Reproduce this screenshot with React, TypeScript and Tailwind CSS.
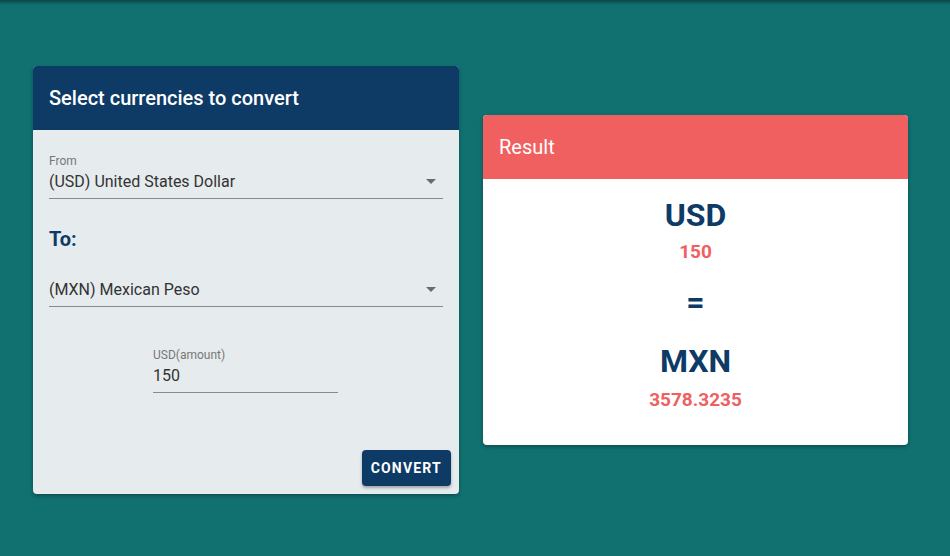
const Caret = () => (
  <svg width="10" height="5" viewBox="0 0 10 5" className="fill-[#6b6b6b]">
    <path d="M0 0 L10 0 L5 5 Z" />
  </svg>
);

const SelectField = ({ label, value }: { label?: string; value: string }) => (
  <div className="flex flex-col">
    {label && <span className="h-[16px] text-[12px] leading-[16px] text-[#777]">{label}</span>}
    <div className="flex items-center justify-between border-b border-[#8a8a8a] pt-[3px] pb-[7px]">
      <span className="text-[16px] leading-[19px] text-[#333]">{value}</span>
      <span className="mr-[7px]">
        <Caret />
      </span>
    </div>
  </div>
);

const App = () => {
  return (
    <div
      className="relative flex min-h-[556px] items-center gap-6 bg-[#117171] pl-[33px] pr-[42px] pt-1"
      style={{ fontFamily: 'Roboto, "Liberation Sans", sans-serif' }}
    >
      {/* app bar shadow */}
      <div className="absolute inset-x-0 top-0 h-[5px] bg-gradient-to-b from-[#0b4646] to-[#117171]" />

      {/* converter card */}
      <div className="flex h-[428px] w-[426px] flex-col overflow-hidden rounded-[4px] bg-[#e6ebee] shadow-[0_2px_4px_rgba(0,0,0,0.3)]">
        <div className="flex h-[64px] items-center bg-[#0e3a66] px-4">
          <h2 className="text-[20px] font-medium leading-none text-white">Select currencies to convert</h2>
        </div>
        <div className="flex flex-1 flex-col px-4 pt-[23px] pb-2">
          <SelectField label="From" value="(USD) United States Dollar" />
          <h3 className="mt-[28px] text-[20px] font-bold leading-[24px] text-[#0e3a66]">To:</h3>
          <div className="mt-[26px]">
            <SelectField value="(MXN) Mexican Peso" />
          </div>
          <div className="ml-[104px] mt-[40px] flex w-[185px] flex-col">
            <span className="text-[12px] leading-[16px] text-[#777]">USD(amount)</span>
            <div className="border-b border-[#8a8a8a] pt-[3px] pb-[7px] text-[16px] leading-[19px] text-[#333]">150</div>
          </div>
          <div className="-mr-2 mt-auto flex justify-end">
            <button className="h-[36px] rounded-[4px] bg-[#0e3a66] px-[9px] text-[14px] font-bold tracking-[1.2px] text-white shadow-[0_2px_3px_rgba(0,0,0,0.3)]">
              CONVERT
            </button>
          </div>
        </div>
      </div>

      {/* result card */}
      <div className="flex h-[330px] w-[425px] flex-col overflow-hidden rounded-[4px] bg-white shadow-[0_2px_4px_rgba(0,0,0,0.3)]">
        <div className="flex h-[64px] items-center bg-[#f06060] px-4">
          <h2 className="text-[20px] leading-none text-white">Result</h2>
        </div>
        <div className="flex flex-col items-center pt-[17px] text-center">
          <div className="text-[32px] font-bold leading-[38px] text-[#0e3a66]">USD</div>
          <div className="mt-[6px] text-[19px] font-bold leading-[24px] text-[#f06060]">150</div>
          <div className="mt-[19px] text-[32px] font-bold leading-[38px] text-[#0e3a66]">=</div>
          <div className="mt-[21px] text-[32px] font-bold leading-[38px] text-[#0e3a66]">MXN</div>
          <div className="mt-[8px] text-[19px] font-bold leading-[24px] text-[#f06060]">3578.3235</div>
        </div>
      </div>
    </div>
  );
};

export default App;
